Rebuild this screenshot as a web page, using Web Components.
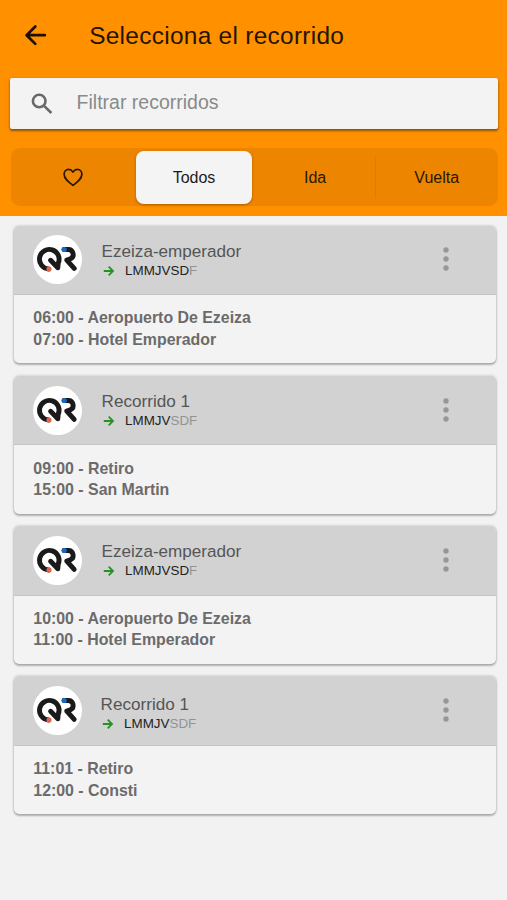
<!DOCTYPE html>
<html lang="es">
<head>
<meta charset="utf-8">
<meta name="viewport" content="width=device-width, initial-scale=1">
<title>Selecciona el recorrido</title>
<style>
  html, body {
    margin: 0;
    height: 100%;
    overflow: hidden;
    background: #f2f2f2;
    font-family: "Liberation Sans", Arial, sans-serif;
  }
</style>
</head>
<body>
<app-header>
  <page-title>Selecciona el recorrido</page-title>
  <search-bar placeholder="Filtrar recorridos"></search-bar>
  <segment-bar>
    <segment-button><heart-icon></heart-icon></segment-button>
    <segment-button selected>Todos</segment-button>
    <segment-button>Ida</segment-button>
    <segment-button divider>Vuelta</segment-button>
  </segment-bar>
</app-header>

<route-list>
  <route-card name="Ezeiza-emperador" active="7">
    <div>06:00 - Aeropuerto De Ezeiza</div>
    <div>07:00 - Hotel Emperador</div>
  </route-card>
  <route-card name="Recorrido 1" active="5">
    <div>09:00 - Retiro</div>
    <div>15:00 - San Martin</div>
  </route-card>
  <route-card name="Ezeiza-emperador" active="7">
    <div>10:00 - Aeropuerto De Ezeiza</div>
    <div>11:00 - Hotel Emperador</div>
  </route-card>
  <route-card class="low" name="Recorrido 1" active="5">
    <div>11:01 - Retiro</div>
    <div>12:00 - Consti</div>
  </route-card>
</route-list>

<script>
class AppHeader extends HTMLElement {
  constructor() {
    super();
    this.attachShadow({ mode: 'open' });
    this.shadowRoot.innerHTML = `
      <style>
        :host {
          display: flex;
          flex-direction: column;
          box-sizing: border-box;
          height: 215.6px;
          padding: 0 9px 0 10px;
          background: #ff9000;
        }
      </style>
      <slot></slot>
    `;
  }
}

class PageTitle extends HTMLElement {
  constructor() {
    super();
    this.attachShadow({ mode: 'open' });
    this.shadowRoot.innerHTML = `
      <style>
        :host {
          display: flex;
          align-items: center;
          height: 70px;
          margin-bottom: 8.4px;
          padding-left: 13.5px;
          color: #241400;
        }
        svg {
          width: 24px;
          height: 24px;
          margin-right: 41.7px;
        }
        h1 {
          margin: 2px 0 0;
          font-size: 24.4px;
          font-weight: normal;
          letter-spacing: 0.3px;
          line-height: 30px;
          white-space: nowrap;
        }
      </style>
      <svg viewBox="0 0 24 24" fill="none" stroke="#1c1000" stroke-width="2.7" stroke-linecap="round" stroke-linejoin="round">
        <path d="M11.300 3.500 2.600 12.200l8.700 8.700M3 12.200h17.800"/>
      </svg>
      <h1><slot></slot></h1>
    `;
  }
}

class SearchBar extends HTMLElement {
  constructor() {
    super();
    this.attachShadow({ mode: 'open' });
    this.shadowRoot.innerHTML = `
      <style>
        :host {
          display: flex;
          align-items: center;
          height: 50.2px;
          margin-bottom: 19.6px;
          background: #f3f3f3;
          border-radius: 2px;
          box-shadow: 0 2px 2px rgba(60, 40, 0, 0.45), 0 1px 3px rgba(0, 0, 0, 0.25);
        }
        svg {
          width: 22px;
          height: 22px;
          margin: 1px 23.4px 0 21.2px;
        }
        span {
          font-size: 19.5px;
          line-height: 24px;
          color: #8a8a8a;
          margin-top: -3px;
        }
      </style>
      <svg viewBox="0 0 22 22" fill="none" stroke="#686868" stroke-width="2.6">
        <circle cx="8.2" cy="8" r="6.3"/>
        <path d="m12.8 12.6 7.6 7.4"/>
      </svg>
      <span></span>
    `;
  }

  connectedCallback() {
    this.shadowRoot.querySelector('span').textContent = this.getAttribute('placeholder');
  }
}

class SegmentBar extends HTMLElement {
  constructor() {
    super();
    this.attachShadow({ mode: 'open' });
    this.shadowRoot.innerHTML = `
      <style>
        :host {
          display: grid;
          grid-template-columns: repeat(4, 1fr);
          height: 58px;
          margin: 0 0.5px 0 1px;
          background: #ee8500;
          border-radius: 9px;
        }
      </style>
      <slot></slot>
    `;
  }
}

class SegmentButton extends HTMLElement {
  constructor() {
    super();
    this.attachShadow({ mode: 'open' });
    this.shadowRoot.innerHTML = `
      <style>
        :host {
          display: flex;
          align-items: center;
          justify-content: center;
          box-sizing: border-box;
          margin: 2.4px 2.5px;
          padding-top: 1px;
          font-size: 16px;
          color: #2a1700;
        }
        :host([selected]) {
          margin: 2.4px 2px 2.4px 3.2px;
          background: #f4f4f4;
          border-radius: 8px;
          color: #1b1b1b;
          box-shadow: 0 1px 3px rgba(90, 50, 0, 0.45);
        }
        :host([divider]) {
          position: relative;
        }
        :host([divider])::before {
          content: "";
          position: absolute;
          left: -3px;
          top: 6px;
          bottom: 6px;
          width: 1px;
          background: #df7d00;
        }
      </style>
      <slot></slot>
    `;
  }
}

class HeartIcon extends HTMLElement {
  constructor() {
    super();
    this.attachShadow({ mode: 'open' });
    this.shadowRoot.innerHTML = `
      <style>
        :host { display: block; width: 20px; height: 19px; margin: -1px 0 0 2px; }
        svg { display: block; }
      </style>
      <svg width="20" height="19" viewBox="0 0 20 19" fill="none" stroke="#2a1700" stroke-width="1.7" stroke-linejoin="round">
        <path d="M10 4.1C8.8 2.2 7.3 1.4 5.6 1.4 3 1.4 1.1 3.500 1.1 6.200c0 4.500 4.400 7.800 8.900 11.200 4.500-3.400 8.900-6.700 8.900-11.200 0-2.700-1.900-4.800-4.500-4.800-1.700 0-3.200.8-4.400 2.700z"/>
      </svg>
    `;
  }
}

class RouteList extends HTMLElement {
  constructor() {
    super();
    this.attachShadow({ mode: 'open' });
    this.shadowRoot.innerHTML = `
      <style>
        :host {
          display: flex;
          flex-direction: column;
          gap: 12.5px;
          padding: 10.1px 11px 0 13.500px;
        }
      </style>
      <slot></slot>
    `;
  }
}

// round company badge
class RouteLogo extends HTMLElement {
  constructor() {
    super();
    this.attachShadow({ mode: 'open' });
    this.shadowRoot.innerHTML = `
      <style>
        :host { display: block; width: 49px; height: 49px; }
        svg { display: block; }
      </style>
      <svg width="49" height="49" viewBox="0 0 49 49" fill="none" stroke-width="4.900" stroke-linecap="round" stroke-linejoin="round">
        <circle cx="24.500" cy="24.500" r="24.500" fill="#fff"/>
        <path stroke="#1a1a1a" d="M15.500 34A9.800 9.800 0 1 1 25.200 28.300L24.800 32.700 17.600 25.300"/>
        <path stroke="#1a1a1a" d="M31 14.500h4.100a4.900 4.900 0 0 1 2.300 9.300l-3.600 1.300 7.400 8.300"/>
        <circle cx="16" cy="34" r="2.600" fill="#dd6748"/>
        <circle cx="31.200" cy="14.500" r="2.600" fill="#1769c8"/>
      </svg>
    `;
  }
}

class RouteCard extends HTMLElement {
  constructor() {
    super();
    this.attachShadow({ mode: 'open' });
    this.shadowRoot.innerHTML = `
      <style>
        :host {
          display: block;
          height: 137.7px;
          background: #f3f3f3;
          border-radius: 5px;
          overflow: hidden;
          box-shadow: 0 2px 2px rgba(0, 0, 0, 0.24), 0 0 3px rgba(0, 0, 0, 0.24);
        }
        header {
          display: flex;
          align-items: center;
          box-sizing: border-box;
          height: 69.5px;
          padding: 0 47px 0 19.500px;
          background: #d2d2d2;
          border-bottom: 1px solid #c4c4c4;
        }
        .info {
          flex: 1;
          margin: 2px 0 0 19.6px;
        }
        :host(.low) .info {
          margin: 7px 0 0 18.6px;
        }
        .name {
          font-size: 17.1px;
          line-height: 20px;
          color: #555;
        }
        .days {
          display: flex;
          align-items: center;
          font-size: 13.4px;
          line-height: 18px;
          color: #222;
        }
        .days svg { margin: 0 10px 0 1.500px; }
        .off { color: #929292; }
        .stops {
          padding: 12.3px 19.8px;
          font-size: 15.9px;
          font-weight: bold;
          line-height: 21.5px;
          color: #6b6b6b;
        }
        .more { margin-top: -1px; }
      </style>
      <header>
        <route-logo></route-logo>
        <div class="info">
          <div class="name"></div>
          <div class="days">
            <svg width="12" height="12" viewBox="0 0 12 12" fill="none" stroke="#259225" stroke-width="1.800">
              <path d="M.8 6h8.900M5.700 1.700 10 6l-4.300 4.300"/>
            </svg>
            <span class="on"></span><span class="off"></span>
          </div>
        </div>
        <svg class="more" width="6" height="24" viewBox="0 0 6 24" fill="#979797">
          <circle cx="3" cy="3" r="2.700"/>
          <circle cx="3" cy="12" r="2.700"/>
          <circle cx="3" cy="21" r="2.700"/>
        </svg>
      </header>
      <div class="stops"><slot></slot></div>
    `;
  }

  connectedCallback() {
    const days = 'LMMJVSDF';
    const active = Number(this.getAttribute('active'));
    this.shadowRoot.querySelector('.name').textContent = this.getAttribute('name');
    this.shadowRoot.querySelector('.on').textContent = days.slice(0, active);
    this.shadowRoot.querySelector('.off').textContent = days.slice(active);
  }
}

customElements.define('app-header', AppHeader);
customElements.define('page-title', PageTitle);
customElements.define('search-bar', SearchBar);
customElements.define('segment-bar', SegmentBar);
customElements.define('segment-button', SegmentButton);
customElements.define('heart-icon', HeartIcon);
customElements.define('route-list', RouteList);
customElements.define('route-logo', RouteLogo);
customElements.define('route-card', RouteCard);
</script>
</body>
</html>
